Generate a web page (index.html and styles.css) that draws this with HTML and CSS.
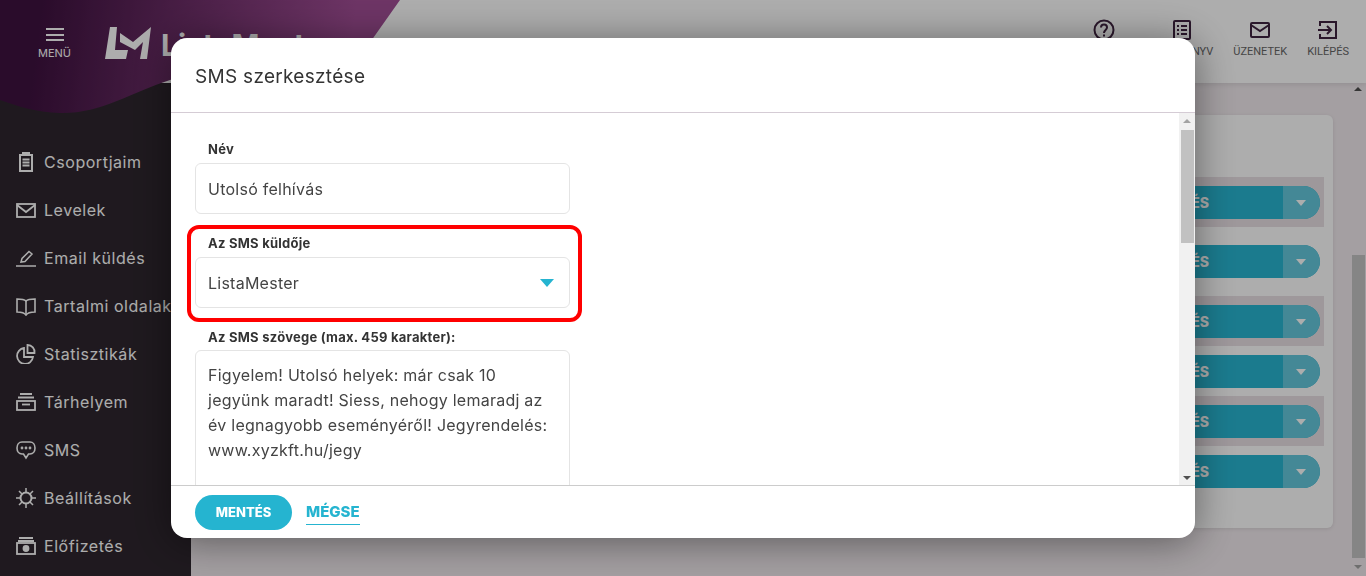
FILE: index.html
```html
<!DOCTYPE html>
<html lang="hu">

<head>
    <meta charset="utf-8">
    <meta name="viewport" content="width=device-width, initial-scale=1.0">
    <title>SMS szerkesztése</title>
    <link rel="stylesheet" href="styles.css">
</head>

<body>
    <div class="app">
        <svg class="swoosh" width="400" height="114" viewBox="0 0 400 114">
            <defs>
                <linearGradient id="lila" x1="40" y1="20" x2="350" y2="60" gradientUnits="userSpaceOnUse">
                    <stop offset="0" stop-color="#3f1240" />
                    <stop offset="1" stop-color="#a24e96" />
                </linearGradient>
            </defs>
            <path d="M0 0H400L340 85C300 70 210 68 170 80C130 93 100 114 60 113C35 112 20 107 0 100Z" fill="url(#lila)" />
        </svg>

        <header class="topbar">
            <div class="brand">
                <button class="menu-btn">
                    <span class="burger"></span>
                    <span>MENÜ</span>
                </button>
                <svg class="logo" width="47" height="34" viewBox="0 0 47 34">
                    <path d="M5 1H12L10 24H23L21 33H0Z" fill="#fff" />
                    <path d="M15 7V16L30 24L38 16L35 33H42L46 1L28 16Z" fill="#fff" />
                </svg>
                <span class="logo-text">ListaMester</span>
            </div>
            <nav class="topnav">
                <a class="toplink toplink-sugo">
                    <svg width="24" height="24" viewBox="0 0 24 24" fill="none" stroke="#3f2340" stroke-width="2">
                        <circle cx="12" cy="12" r="9.5" />
                        <path d="M9 9.5C9 5.5 15 5.5 15 9.5C15 12 12 12 12 15" />
                        <path d="M12 16.5V18.5" />
                    </svg>
                    <span>SÚGÓ</span>
                </a>
                <a class="toplink toplink-konyv">
                    <svg width="24" height="24" viewBox="0 0 24 24" fill="none" stroke="#3f2340" stroke-width="2">
                        <rect x="4" y="3" width="16" height="18" rx="1" />
                        <path d="M7 8H9M11 8H17M7 12H9M11 12H17M7 16H9M11 16H17" />
                    </svg>
                    <span>KÉZIKÖNYV</span>
                </a>
                <a class="toplink toplink-uzenet">
                    <svg width="24" height="24" viewBox="0 0 24 24" fill="none" stroke="#3f2340" stroke-width="2">
                        <rect x="3" y="5" width="18" height="14" rx="1" />
                        <path d="M3 7L12 13L21 7" />
                    </svg>
                    <span>ÜZENETEK</span>
                </a>
                <a class="toplink toplink-kilep">
                    <svg width="24" height="24" viewBox="0 0 24 24" fill="none" stroke="#3f2340" stroke-width="2">
                        <path d="M4 8V4H20V20H4V16" />
                        <path d="M2 12H15M11 8L15 12L11 16" />
                    </svg>
                    <span>KILÉPÉS</span>
                </a>
            </nav>
        </header>

        <aside class="sidebar">
            <a class="side-item">
                <svg width="20" height="20" viewBox="0 0 20 20" fill="none" stroke="currentColor" stroke-width="2">
                    <rect x="4" y="3" width="12" height="16" />
                    <path d="M7 3V1H13V3M6.5 7.500H13.500M6.500 10.500H13.500M6.500 13.500H13.500" />
                </svg>
                Csoportjaim
            </a>
            <a class="side-item">
                <svg width="20" height="20" viewBox="0 0 20 20" fill="none" stroke="currentColor" stroke-width="1.800">
                    <rect x="1" y="4" width="18" height="13" />
                    <path d="M1 5L10 12L19 5" />
                </svg>
                Levelek
            </a>
            <a class="side-item">
                <svg width="20" height="20" viewBox="0 0 20 20" fill="none" stroke="currentColor" stroke-width="1.500">
                    <path d="M5 14L6 10.500L13 3.500L16 6L9 13.500Z" />
                    <path d="M0 18H20" />
                </svg>
                Email küldés
            </a>
            <a class="side-item">
                <svg width="20" height="20" viewBox="0 0 20 20" fill="none" stroke="currentColor" stroke-width="1.600">
                    <path d="M1 3C4 3 8 3 10 5C12 3 16 3 19 3V16C16 16 12 16 10 19C8 16 4 16 1 16Z" />
                    <path d="M10 5V19" />
                </svg>
                Tartalmi oldalak
            </a>
            <a class="side-item">
                <svg width="20" height="20" viewBox="0 0 20 20" fill="none" stroke="currentColor" stroke-width="1.800">
                    <path d="M8 4A8 8 0 1 0 17 13H8Z" />
                    <path d="M11.500 1A7 7 0 0 1 18.500 9H11.500Z" />
                </svg>
                Statisztikák
            </a>
            <a class="side-item">
                <svg width="20" height="20" viewBox="0 0 20 20" fill="none" stroke="currentColor" stroke-width="1.800">
                    <path d="M4 2H16M2 5.500H18" />
                    <rect x="1" y="9" width="18" height="9" />
                    <path d="M6 12.500H14" />
                </svg>
                Tárhelyem
            </a>
            <a class="side-item">
                <svg width="20" height="20" viewBox="0 0 20 20" fill="none" stroke="currentColor" stroke-width="1.600">
                    <path d="M6 2H14C17 2 19 4.500 19 8C19 11.500 17 14 14 14H12.500L10 18L7.500 14H6C3 14 1 11.500 1 8C1 4.500 3 2 6 2Z" />
                    <circle cx="6" cy="8" r="0.600" />
                    <circle cx="10" cy="8" r="0.600" />
                    <circle cx="14" cy="8" r="0.600" />
                </svg>
                SMS
            </a>
            <a class="side-item">
                <svg width="20" height="20" viewBox="0 0 20 20" fill="none" stroke="currentColor" stroke-width="2">
                    <circle cx="10" cy="10" r="5.500" />
                    <path d="M10 0V4M10 16V20M0 10H4M16 10H20M3 3L6 6M14 14L17 17M17 3L14 6M6 14L3 17" stroke-width="1.500" />
                </svg>
                Beállítások
            </a>
            <a class="side-item">
                <svg width="20" height="20" viewBox="0 0 20 20" fill="none" stroke="currentColor" stroke-width="1.800">
                    <path d="M3 2H17M2 5H18" />
                    <rect x="1" y="7" width="18" height="11" />
                    <circle cx="10" cy="12.500" r="2.500" fill="currentColor" />
                </svg>
                Előfizetés
            </a>
        </aside>

        <main class="main">
            <section class="card">
                <div class="row row-stripe"><button class="action"><span class="action-label">SZERKESZTÉS</span><span class="action-more"></span></button></div>
                <div class="row row-tall"><button class="action"><span class="action-label">SZERKESZTÉS</span><span class="action-more"></span></button></div>
                <div class="row row-stripe"><button class="action"><span class="action-label">SZERKESZTÉS</span><span class="action-more"></span></button></div>
                <div class="row"><button class="action"><span class="action-label">SZERKESZTÉS</span><span class="action-more"></span></button></div>
                <div class="row row-stripe"><button class="action"><span class="action-label">SZERKESZTÉS</span><span class="action-more"></span></button></div>
                <div class="row"><button class="action"><span class="action-label">SZERKESZTÉS</span><span class="action-more"></span></button></div>
            </section>
            <div class="page-scroll">
                <span class="arrow-up arrow-dark"></span>
                <span class="page-thumb"></span>
                <span class="arrow-down arrow-dim"></span>
            </div>
        </main>
    </div>

    <div class="overlay">
        <div class="modal">
            <div class="modal-head">
                <h2>SMS szerkesztése</h2>
            </div>
            <div class="modal-body">
                <form class="form">
                    <div class="field">
                        <label>Név</label>
                        <div class="input">Utolsó felhívás</div>
                    </div>
                    <div class="field field-marked">
                        <label>Az SMS küldője</label>
                        <div class="input input-select">ListaMester<span class="caret"></span></div>
                    </div>
                    <div class="field">
                        <label class="label-tight">Az SMS szövege (max. 459 karakter):</label>
                        <div class="textarea">Figyelem! Utolsó helyek: már csak 10 jegyünk maradt! Siess, nehogy lemaradj az év legnagyobb eseményéről! Jegyrendelés: www.xyzkft.hu/jegy</div>
                    </div>
                </form>
                <div class="modal-scroll">
                    <span class="arrow-up"></span>
                    <span class="modal-thumb"></span>
                    <span class="arrow-down"></span>
                </div>
            </div>
            <div class="modal-foot">
                <button class="btn-save">MENTÉS</button>
                <a class="btn-cancel">MÉGSE</a>
            </div>
        </div>
    </div>
</body>

</html>
```

FILE: styles.css
```css
* {
    margin: 0;
    padding: 0;
    box-sizing: border-box;
}

html,
body {
    height: 100%;
    overflow: hidden;
}

body {
    font-family: "Inter", "Liberation Sans", sans-serif;
    background-color: #f2ebef;
}

button {
    border: 0;
    font-family: inherit;
}

.app {
    display: grid;
    grid-template-columns: 191px 1fr;
    grid-template-rows: 83px 1fr;
    height: 100vh;
    position: relative;
}

.swoosh {
    position: absolute;
    top: 0;
    left: 0;
    z-index: 2;
}

/* felső sáv */
.topbar {
    grid-column: 1 / 3;
    display: flex;
    justify-content: space-between;
    background-color: #fff;
    box-shadow: 0 1px 6px rgba(0, 0, 0, 0.12);
    position: relative;
}

.brand {
    display: flex;
    align-items: flex-start;
    padding-left: 38px;
    position: relative;
    z-index: 3;
}

.menu-btn {
    width: 33px;
    margin-top: 28px;
    background: none;
    color: #fff;
    font-size: 11px;
    line-height: 13px;
}

.burger {
    display: block;
    width: 18px;
    height: 13px;
    margin: 0 auto 6px;
    border-top: 2px solid #fff;
    border-bottom: 2px solid #fff;
    position: relative;
}

.burger::after {
    content: "";
    position: absolute;
    left: 0;
    right: 0;
    top: 3.5px;
    height: 2px;
    background-color: #fff;
}

.logo {
    margin: 26px 0 0 34px;
}

.logo-text {
    margin: 27px 0 0 9px;
    color: #fff;
    font-size: 30px;
    line-height: 36px;
    font-weight: 700;
}

.topnav {
    display: flex;
    padding-top: 18px;
    padding-right: 17px;
    position: relative;
    z-index: 3;
}

.toplink {
    display: flex;
    flex-direction: column;
    align-items: center;
    gap: 2px;
    color: #666;
    font-family: "Roboto", sans-serif;
    font-size: 11px;
    line-height: 16px;
}

.toplink-sugo {
    margin-right: 33px;
}

.toplink-konyv {
    width: 62px;
    margin-right: 20px;
}

.toplink-konyv span {
    align-self: flex-end;
}

.toplink-uzenet {
    margin-right: 20px;
}

/* oldalsáv */
.sidebar {
    background-color: #2e262e;
    padding-top: 55px;
}

.side-item {
    display: flex;
    align-items: center;
    gap: 8px;
    height: 48px;
    padding-left: 16px;
    color: #fff;
    font-size: 16px;
    letter-spacing: 0.55px;
    white-space: nowrap;
}

/* tartalom */
.main {
    display: flex;
    justify-content: space-between;
    min-width: 0;
}

.card {
    flex: 1;
    height: 413px;
    margin: 32px 0 0 20px;
    padding-top: 62px;
    background-color: #fff;
    border-radius: 6px;
    box-shadow: 0 1px 4px rgba(0, 0, 0, 0.1);
}

.row {
    display: flex;
    align-items: center;
    justify-content: flex-end;
    height: 50px;
    padding-right: 4px;
    margin-right: 9px;
}

.row-stripe {
    background-color: #e9e0e5;
}

.row-tall {
    height: 69px;
}

.action {
    display: flex;
    width: 240px;
    height: 33px;
    border-radius: 17px;
    overflow: hidden;
    background-color: #28b6d2;
    color: #fff;
    font-size: 14px;
    font-weight: 800;
}

.action-label {
    flex: 1;
    line-height: 33px;
    text-align: right;
    padding-right: 74px;
}

.action-more {
    width: 37px;
    background-color: #65c9dd;
    position: relative;
}

.action-more::after {
    content: "";
    position: absolute;
    left: 13px;
    top: 14px;
    border-left: 5px solid transparent;
    border-right: 5px solid transparent;
    border-top: 6px solid #fff;
}

.page-scroll {
    width: 33px;
    display: flex;
    flex-direction: column;
    align-items: center;
    padding: 4px 0 7px 17px;
}

.page-thumb {
    width: 13px;
    height: 303px;
    margin: 164px 0 auto;
    background-color: #c4c4c4;
}

.arrow-up,
.arrow-down {
    display: block;
    width: 0;
    border-left: 4px solid transparent;
    border-right: 4px solid transparent;
}

.arrow-up {
    border-bottom: 4px solid #a3a3a3;
}

.arrow-down {
    border-top: 4px solid #505050;
}

.arrow-dark {
    border-bottom-color: #505050;
}

.arrow-dim {
    border-top-color: #a3a3a3;
}

/* modális ablak */
.overlay {
    position: fixed;
    inset: 0;
    z-index: 10;
    display: flex;
    align-items: center;
    justify-content: center;
    background-color: rgba(0, 0, 0, 0.32);
}

.modal {
    display: flex;
    flex-direction: column;
    width: 1024px;
    height: 500px;
    background-color: #fff;
    border-radius: 16px;
    overflow: hidden;
    box-shadow: 0 4px 40px rgba(0, 0, 0, 0.45);
}

.modal-head {
    height: 75px;
    padding: 0 24px;
    border-bottom: 1px solid #d5ccd5;
}

.modal-head h2 {
    font-size: 19px;
    line-height: 78px;
    font-weight: 400;
    color: #333;
    letter-spacing: 0.3px;
}

.modal-body {
    flex: 1;
    display: flex;
    justify-content: space-between;
    min-height: 0;
    overflow: hidden;
}

.form {
    width: 399px;
    padding: 26px 0 0 24px;
}

.field {
    position: relative;
    margin-bottom: 19px;
}

.field label {
    display: block;
    margin: 0 0 4px 13px;
    font-size: 13px;
    line-height: 20px;
    font-weight: 700;
    color: #333;
    letter-spacing: 0.25px;
}

.field .label-tight {
    margin-bottom: 3px;
}

.input {
    display: flex;
    align-items: center;
    justify-content: space-between;
    height: 51px;
    padding: 0 12px;
    border: 1px solid #e4e4e4;
    border-radius: 6px;
    font-size: 16px;
    letter-spacing: 0.25px;
    color: #444;
}

.caret {
    margin-right: 3px;
    border-left: 7px solid transparent;
    border-right: 7px solid transparent;
    border-top: 8px solid #25b4d0;
}

.field-marked::after {
    content: "";
    position: absolute;
    top: -8px;
    bottom: -14px;
    left: -8px;
    right: -12px;
    border: 4px solid #f00;
    border-radius: 12px;
}

.textarea {
    height: 160px;
    padding: 12px;
    border: 1px solid #e4e4e4;
    border-radius: 6px;
    font-size: 16px;
    letter-spacing: 0.25px;
    line-height: 25px;
    color: #444;
}

.modal-scroll {
    width: 16px;
    display: flex;
    flex-direction: column;
    align-items: center;
    padding: 6px 0 5px;
    background-color: #f1f1f1;
}

.modal-thumb {
    width: 13px;
    height: 113px;
    margin: 7px 0 auto;
    background-color: #c1c1c1;
}

.modal-foot {
    display: flex;
    align-items: center;
    gap: 14px;
    height: 53px;
    padding: 0 24px;
    border-top: 1px solid #ccc;
}

.btn-save {
    width: 97px;
    height: 35px;
    border-radius: 18px;
    background-color: #25b4d0;
    color: #fff;
    font-size: 13px;
    font-weight: 800;
}

.btn-cancel {
    margin-top: 3px;
    padding-bottom: 3px;
    border-bottom: 1px solid #25b4d0;
    color: #25b4d0;
    font-size: 15px;
    line-height: 18px;
    font-weight: 800;
}
```
